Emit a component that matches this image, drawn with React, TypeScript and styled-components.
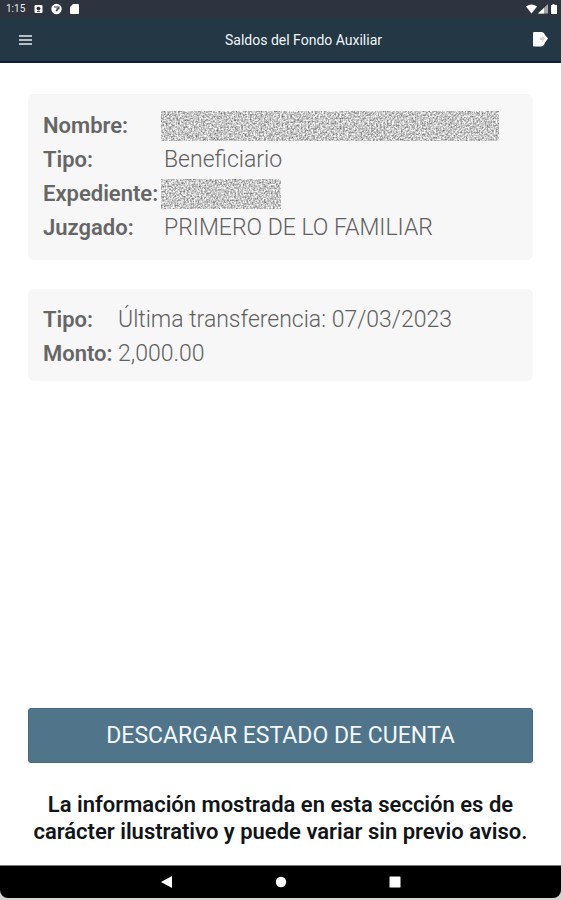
import React from "react";
import styled, { createGlobalStyle } from "styled-components";

const GlobalStyle = createGlobalStyle`
  *, *::before, *::after { box-sizing: border-box; }
  body {
    margin: 0;
    background: #d4d4d4;
    font-family: Roboto, "Liberation Sans", sans-serif;
  }
`;

const Screen = styled.div`
  min-height: 100vh;
  display: flex;
  flex-direction: column;
  padding: 0 2px 2px 0;
`;

const StatusBar = styled.div`
  display: flex;
  align-items: center;
  justify-content: space-between;
  height: 18px;
  padding: 0 3px 0 6px;
  background: #2d343f;
  color: #e9ecef;
  font-size: 10px;
  line-height: 18px;
`;

const StatusGroup = styled.div<{ $gap: number }>`
  display: flex;
  align-items: center;
  gap: ${({ $gap }) => $gap}px;
`;

const Clock = styled.time`
  width: 20px;
`;

const Icon = styled.svg`
  display: block;
  flex: none;
`;

const AppBar = styled.header`
  display: flex;
  align-items: center;
  height: 45px;
  padding: 0 12px 0 18px;
  background: #233744;
  border-bottom: 2px solid #101b3e;
`;

const Title = styled.h1`
  flex: 1;
  margin: 0;
  padding-left: 42px;
  color: #f2f5f7;
  font-size: 14px;
  font-weight: 400;
  line-height: 20px;
  text-align: center;
`;

const IconButton = styled.button`
  display: flex;
  align-items: center;
  justify-content: center;
  height: 40px;
  padding: 0;
  border: 0;
  background: none;
  color: #ffffff;
  cursor: pointer;
`;

const Content = styled.main`
  flex: 1;
  display: flex;
  flex-direction: column;
  gap: 29px;
  padding: 31px 28px 20px;
  background: #ffffff;
`;

const Card = styled.dl<{ $labelWidth: number }>`
  display: grid;
  grid-template-columns: ${({ $labelWidth }) => $labelWidth}px 1fr;
  margin: 0;
  padding: 14px 15px 10px;
  border-radius: 6px;
  background: #f7f7f7;
  font-size: 23px;
  line-height: 34px;
  white-space: nowrap;
`;

const DetailCard = styled(Card)`
  padding: 15px;
`;

const Label = styled.dt`
  color: #666666;
  font-size: 22px;
  font-weight: 600;
`;

const Value = styled.dd`
  display: flex;
  align-items: center;
  margin: 0;
  color: #606060;
  font-weight: 300;
`;

const Redacted = styled.svg<{ $width: number }>`
  display: block;
  width: ${({ $width }) => $width}px;
  height: 30px;
  margin-left: -3px;
`;

const Footer = styled.section`
  display: flex;
  flex-direction: column;
  gap: 28px;
  margin-top: auto;
`;

const DownloadButton = styled.button`
  height: 55px;
  border: 1px solid #456a7f;
  border-radius: 3px;
  background: #50748a;
  color: #f3f8fb;
  font-family: inherit;
  font-size: 23px;
  font-weight: 400;
  cursor: pointer;
`;

const Notice = styled.p`
  margin: 0;
  color: #111518;
  font-size: 22px;
  font-weight: 600;
  line-height: 27px;
  text-align: center;
`;

const NavBar = styled.nav`
  display: flex;
  align-items: center;
  justify-content: center;
  gap: 74px;
  height: 33px;
  border-top: 1px solid #777777;
  border-radius: 0 0 8px 8px;
  background: #000000;
`;

const NavButton = styled(IconButton)`
  width: 40px;
  height: 32px;
`;

function NoiseBlock({ id, width, seed }: { id: string; width: number; seed: number }) {
  return (
    <Redacted $width={width} role="img" aria-label="Dato oculto">
      <filter id={id} x="0" y="0" width="100%" height="100%" colorInterpolationFilters="sRGB">
        <feTurbulence type="fractalNoise" baseFrequency="0.57" numOctaves={3} seed={seed} />
        <feColorMatrix values="1 0 0 0 0.28  1 0 0 0 0.28  1 0 0 0 0.28  0 0 0 0 1" />
      </filter>
      <rect width="100%" height="100%" filter={`url(#${id})`} />
    </Redacted>
  );
}

export default function App() {
  return (
    <>
      <GlobalStyle />
      <Screen>
        <StatusBar>
          <StatusGroup $gap={8}>
            <Clock>1:15</Clock>
            <Icon width="9" height="10" viewBox="0 0 9 10">
              <rect x="0.5" y="1" width="8" height="8" rx="1" fill="#fff" />
              <circle cx="4.5" cy="4.6" r="1.9" fill="#2d343f" />
              <path d="M3 7.5h3" fill="none" stroke="#2d343f" strokeWidth="0.8" />
            </Icon>
            <Icon width="11" height="12" viewBox="0 0 11 12">
              <circle cx="5.5" cy="6" r="5.2" fill="#fff" />
              <path d="M3 4h4.8v1.8H6V7.6H4.8" fill="none" stroke="#2d343f" strokeWidth="1.2" />
            </Icon>
            <Icon width="9" height="10" viewBox="0 0 9 10">
              <path d="M3 0h5q1 0 1 1v8q0 1-1 1H1q-1 0-1-1V3z" fill="#fff" />
            </Icon>
          </StatusGroup>
          <StatusGroup $gap={1}>
            <Icon width="11" height="10" viewBox="0 0 11 10">
              <path d="M0 2.5Q5.5-1.5 11 2.5L5.5 9.5z" fill="#fff" />
            </Icon>
            <Icon width="10" height="10" viewBox="0 0 10 10">
              <path d="M10 0v9.5H0z" fill="#a5a9ae" />
              <path d="M6 4v5.5H0z" fill="#fff" />
            </Icon>
            <Icon width="9" height="10" viewBox="0 0 9 10">
              <path d="M3.5 0h2v1H8v9H2V1h1.5z" fill="#fff" />
            </Icon>
          </StatusGroup>
        </StatusBar>

        <AppBar>
          <IconButton type="button" aria-label="Abrir menú">
            <Icon width="15" height="10" viewBox="0 0 15 10">
              <path d="M1 1h13M1 5h13M1 9h13" stroke="#e8ebef" strokeWidth="1.3" />
            </Icon>
          </IconButton>
          <Title>Saldos del Fondo Auxiliar</Title>
          <IconButton type="button" aria-label="Cerrar sesión">
            <Icon width="17" height="16" viewBox="0 0 17 16">
              <path d="M2 0h7q3 0 4 3l3 3.5-3 4q-1 4-4 4H2q-1 0-1-1V1q0-1 1-1z" fill="#fff" />
              <path d="M8 5.5h2.5v-2l2.5 3-2.5 3.5V8H8z" fill="#cfd4d6" />
            </Icon>
          </IconButton>
        </AppBar>

        <Content>
          <DetailCard $labelWidth={121}>
            <Label>Nombre:</Label>
            <Value><NoiseBlock id="noise-name" width={338} seed={4} /></Value>
            <Label>Tipo:</Label>
            <Value>Beneficiario</Value>
            <Label>Expediente:</Label>
            <Value><NoiseBlock id="noise-file" width={120} seed={9} /></Value>
            <Label>Juzgado:</Label>
            <Value>PRIMERO DE LO FAMILIAR</Value>
          </DetailCard>

          <Card $labelWidth={75}>
            <Label>Tipo:</Label>
            <Value>Última transferencia: 07/03/2023</Value>
            <Label>Monto:</Label>
            <Value>2,000.00</Value>
          </Card>

          <Footer>
            <DownloadButton type="button">DESCARGAR ESTADO DE CUENTA</DownloadButton>
            <Notice>
              La información mostrada en esta sección es de carácter ilustrativo y puede variar sin previo aviso.
            </Notice>
          </Footer>
        </Content>

        <NavBar aria-label="Navegación del sistema">
          <NavButton type="button" aria-label="Atrás">
            <Icon width="12" height="12" viewBox="0 0 12 12"><path d="M11 0v12L0 6z" fill="#fff" /></Icon>
          </NavButton>
          <NavButton type="button" aria-label="Inicio">
            <Icon width="12" height="12" viewBox="0 0 12 12"><circle cx="6" cy="6" r="5.2" fill="#fff" /></Icon>
          </NavButton>
          <NavButton type="button" aria-label="Recientes">
            <Icon width="12" height="12" viewBox="0 0 12 12"><rect x="0.5" y="0.5" width="11" height="11" rx="0.5" fill="#fff" /></Icon>
          </NavButton>
        </NavBar>
      </Screen>
    </>
  );
}
